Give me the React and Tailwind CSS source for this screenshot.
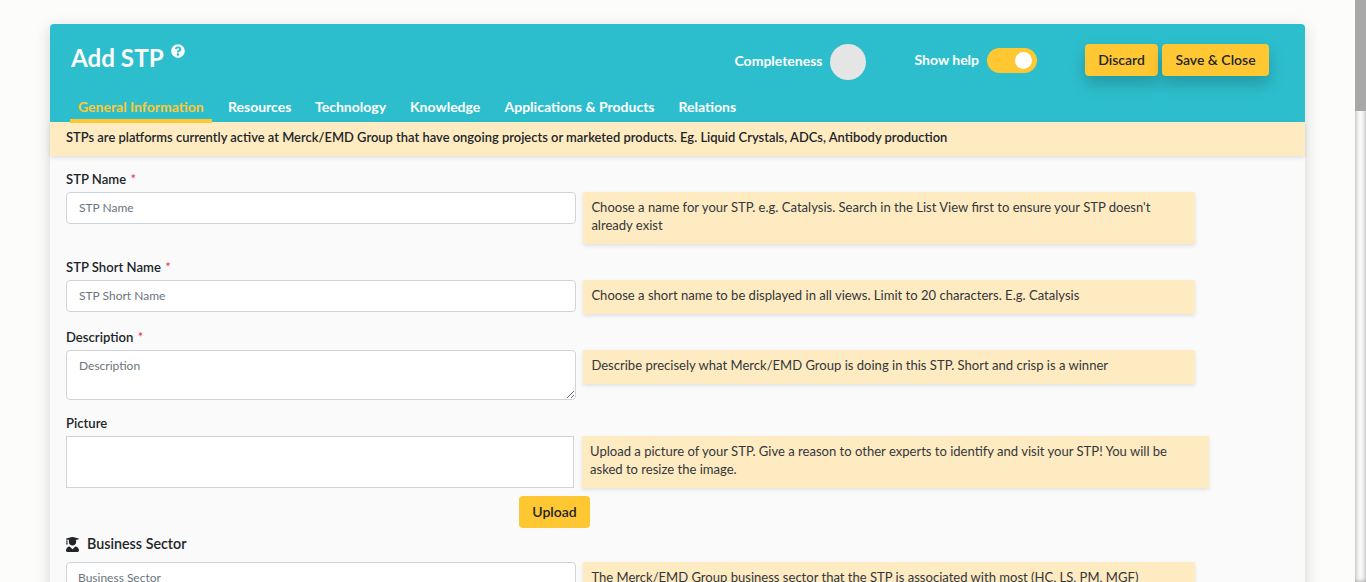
import { FaQuestionCircle, FaUserGraduate } from "react-icons/fa";

const tabs = [
  ["General Information", "w-[142px]"],
  ["Resources", "w-[79px]"],
  ["Technology", "w-[87px]"],
  ["Knowledge", "w-[86.5px]"],
  ["Applications & Products", "w-[166px]"],
  ["Relations", "w-[74px]"],
];

const shadow = "shadow-[0_2px_4px_rgba(0,0,0,0.1)]";
const field =
  "block w-[510px] shrink-0 rounded-[4px] border border-[#ced4da] bg-white px-3 text-[12px] placeholder:text-[#6c757d] outline-none";

function Help({ children, className = "ml-[7.4px] w-[612px]" }) {
  return (
    <p className={`${className} ${shadow} shrink-0 bg-[#ffebc1] px-2 pt-[6px] pb-[10px] text-[13.06px] leading-[18px] text-[#32373c]`}>
      {children}
    </p>
  );
}

function Label({ children, required }) {
  return (
    <div className="h-6 text-[13.1px] leading-[23px] font-semibold">
      {children}
      {required && <span className="ml-[4.5px] font-normal text-[#dc3545]">*</span>}
    </div>
  );
}

function Button({ children, className }) {
  return (
    <button className={`${className} h-8 shrink-0 rounded-[4px] bg-[#ffc832] pb-[2px] text-center text-[14px] font-semibold whitespace-nowrap text-[#212529]`}>
      {children}
    </button>
  );
}

export default function App() {
  return (
    <div className="flex h-[582px] overflow-hidden bg-[#fcfcfa] font-['Lato',sans-serif] text-[#212529]">
      <main className="min-w-0 flex-1 pt-6 pl-[50px]">
        <div className="h-[700px] w-[1255px] rounded-[4px] bg-[#fafafa] shadow-[0_4px_16px_rgba(0,0,0,0.16)]">
          <header className="flex h-[98px] flex-col justify-between rounded-t-[4px] bg-[#2dbecd] text-white">
            <div className="flex h-[76px] items-start pt-5">
              <h1 className="flex w-[684px] pl-[21px] text-[24.2px] leading-[28px] font-bold text-[#fafafa]">
                Add STP
                <FaQuestionCircle className="ml-[7px] size-[14px]" />
              </h1>
              <div className="flex w-[180px] items-center text-[14px] font-bold">
                <span className="w-[96px] pb-[3px] pl-[0.5px]">Completeness</span>
                <span className="size-9 rounded-full bg-[#e5e5e5]" />
              </div>
              <div className="flex h-8 w-[171px] items-center text-[14px] font-bold">
                <span className="w-[73px] pb-[2px] pl-[0.5px]">Show help</span>
                <span className="flex h-[25px] w-[50px] items-center justify-end rounded-full bg-[#ffc832] pr-[5px]">
                  <span className="size-[17px] rounded-full bg-white" />
                </span>
              </div>
              <div className="flex gap-1">
                <Button className="w-[73px] shadow-[0_8px_16px_rgba(0,0,0,0.2)]">Discard</Button>
                <Button className="w-[107px] shadow-[0_8px_16px_rgba(0,0,0,0.2)]">Save &amp; Close</Button>
              </div>
            </div>
            <nav className="z-10 -mb-px flex h-[29px] gap-2 pl-5 text-[14px] leading-[26px] font-bold whitespace-nowrap">
              {tabs.map(([name, width], i) => (
                <a
                  key={name}
                  className={`${width} px-2 ${i === 0 ? "border-b-4 border-[#ffc832] text-[#ffc832]" : ""}`}
                >
                  {name}
                </a>
              ))}
            </nav>
          </header>
          <div className={`${shadow} h-[34px] bg-[#ffebc1] pl-4 text-[12.95px] leading-[31px] font-semibold`}>
            STPs are platforms currently active at Merck/EMD Group that have ongoing projects or marketed products. Eg. Liquid Crystals, ADCs, Antibody production
          </div>
          <form className="pt-3 pl-4">
            <section className="h-[88px]">
              <Label required>STP Name</Label>
              <div className="flex items-start">
                <input className={`${field} h-8 pb-[2px]`} placeholder="STP Name" />
                <Help>
                  Choose a name for your STP. e.g. Catalysis. Search in the List View first to ensure your STP doesn't
                  <br />
                  already exist
                </Help>
              </div>
            </section>
            <section className="h-[70px]">
              <Label required>STP Short Name</Label>
              <div className="flex items-start">
                <input className={`${field} h-8 pb-[2px]`} placeholder="STP Short Name" />
                <Help>Choose a short name to be displayed in all views. Limit to 20 characters. E.g. Catalysis</Help>
              </div>
            </section>
            <section className="h-[86px]">
              <Label required>Description</Label>
              <div className="flex items-start">
                <textarea className={`${field} h-[50px] resize py-[6px] leading-[18px]`} placeholder="Description" />
                <Help>Describe precisely what Merck/EMD Group is doing in this STP. Short and crisp is a winner</Help>
              </div>
            </section>
            <section className="h-[76px]">
              <Label>Picture</Label>
              <div className="flex items-start">
                <div className="h-[52px] w-[508px] shrink-0 border border-[#ced4da] bg-white" />
                <Help className="ml-2 w-[627px]">
                  Upload a picture of your STP. Give a reason to other experts to identify and visit your STP! You will be
                  <br />
                  asked to resize the image.
                </Help>
              </div>
            </section>
            <div className="mt-2 flex pl-[453px]">
              <Button className="w-[71px]">Upload</Button>
            </div>
            <section>
              <div className="flex h-[34px] items-center pb-[2px] text-[14.3px] font-semibold">
                <FaUserGraduate className="mr-2 h-[15px] w-[13px]" preserveAspectRatio="none" />
                Business Sector
              </div>
              <div className="flex items-start">
                <input className={`${field} h-8 px-[11px] pb-[2px]`} placeholder="Business Sector" />
                <Help>The Merck/EMD Group business sector that the STP is associated with most (HC, LS, PM, MGF)</Help>
              </div>
            </section>
          </form>
        </div>
      </main>
      <aside className="h-[582px] w-[11px] shrink-0 bg-[#fafafa] shadow-[inset_0_0_5px_rgba(0,0,0,0.4)]">
        <div className="h-[111px] bg-[#a8a8a8]" />
      </aside>
    </div>
  );
}
